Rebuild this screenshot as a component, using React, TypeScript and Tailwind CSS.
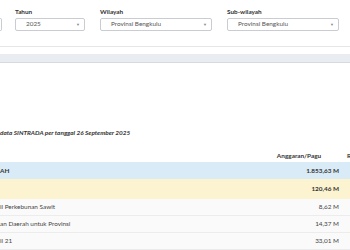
import React from "react";

function Select({ value, className }: { value: string; className: string }) {
  return (
    <div
      className={`h-[13px] border border-[#c9ccd1] rounded-[2px] bg-white flex items-center justify-between pl-[10px] pr-[4px] text-[#555] ${className}`}
    >
      <span className="leading-none">{value}</span>
      <span className="text-[4px] text-[#888] leading-none">▼</span>
    </div>
  );
}

const rows = [
  { label: "il Perkebunan Sawit", value: "8,62 M" },
  { label: "an Daerah untuk Provinsi", value: "14,37 M" },
  { label: "il 21", value: "33,01 M" },
];

export default function App() {
  return (
    <div
      className="w-[350px] h-[250px] overflow-hidden bg-white text-[6.4px] text-[#333]"
      style={{ fontFamily: 'Lato, "Open Sans", sans-serif' }}
    >
      <div className="h-[47px] border-b border-[#e6e6e6] flex items-start pt-[7px]">
        <div className="shrink-0 w-[2px] mt-[11px] h-[13px] border border-l-0 border-[#c9ccd1] rounded-r-[2px]" />
        <div className="ml-[13px] w-[70px] flex flex-col gap-[2px]">
          <div className="font-bold leading-[9px] h-[9px]">Tahun</div>
          <Select value="2025" className="w-[70px]" />
        </div>
        <div className="ml-[15px] w-[112px] flex flex-col gap-[2px]">
          <div className="font-bold leading-[9px] h-[9px]">Wilayah</div>
          <Select value="Provinsi Bengkulu" className="w-[112px]" />
        </div>
        <div className="ml-[15px] w-[112px] flex flex-col gap-[2px]">
          <div className="font-bold leading-[9px] h-[9px]">Sub-wilayah</div>
          <Select value="Provinsi Bengkulu" className="w-[112px]" />
        </div>
      </div>
      <div className="h-[7px]" />
      <div className="h-[9px] bg-[#e9ecf0] border-b border-[#d6d9de]" />
      <div className="h-[65px]" />
      <div className="h-[9px] leading-[9px] font-bold italic text-[#333]">
        data SINTRADA per tanggal 26 September 2025
      </div>
      <div className="h-[13px]" />
      <div className="flex h-[12px] items-center font-bold">
        <div className="flex-1" />
        <div className="w-[80px] text-center">Anggaran/Pagu</div>
        <div className="w-[11px] pl-[8px]">R</div>
      </div>
      <div className="flex h-[17px] items-center bg-[#d9ebf7] font-bold">
        <div className="flex-1">AH</div>
        <div className="w-[80px] text-right">1.853,63 M</div>
        <div className="w-[11px]" />
      </div>
      <div className="flex h-[20px] items-center bg-[#fcf3d0] font-bold">
        <div className="flex-1" />
        <div className="w-[80px] text-right">120,46 M</div>
        <div className="w-[11px]" />
      </div>
      {rows.map((r) => (
        <div
          key={r.label}
          className="flex h-[17px] items-center bg-[#fafafa] border-b border-[#ececec] text-[#444]"
        >
          <div className="flex-1">{r.label}</div>
          <div className="w-[80px] text-right">{r.value}</div>
          <div className="w-[11px]" />
        </div>
      ))}
    </div>
  );
}
